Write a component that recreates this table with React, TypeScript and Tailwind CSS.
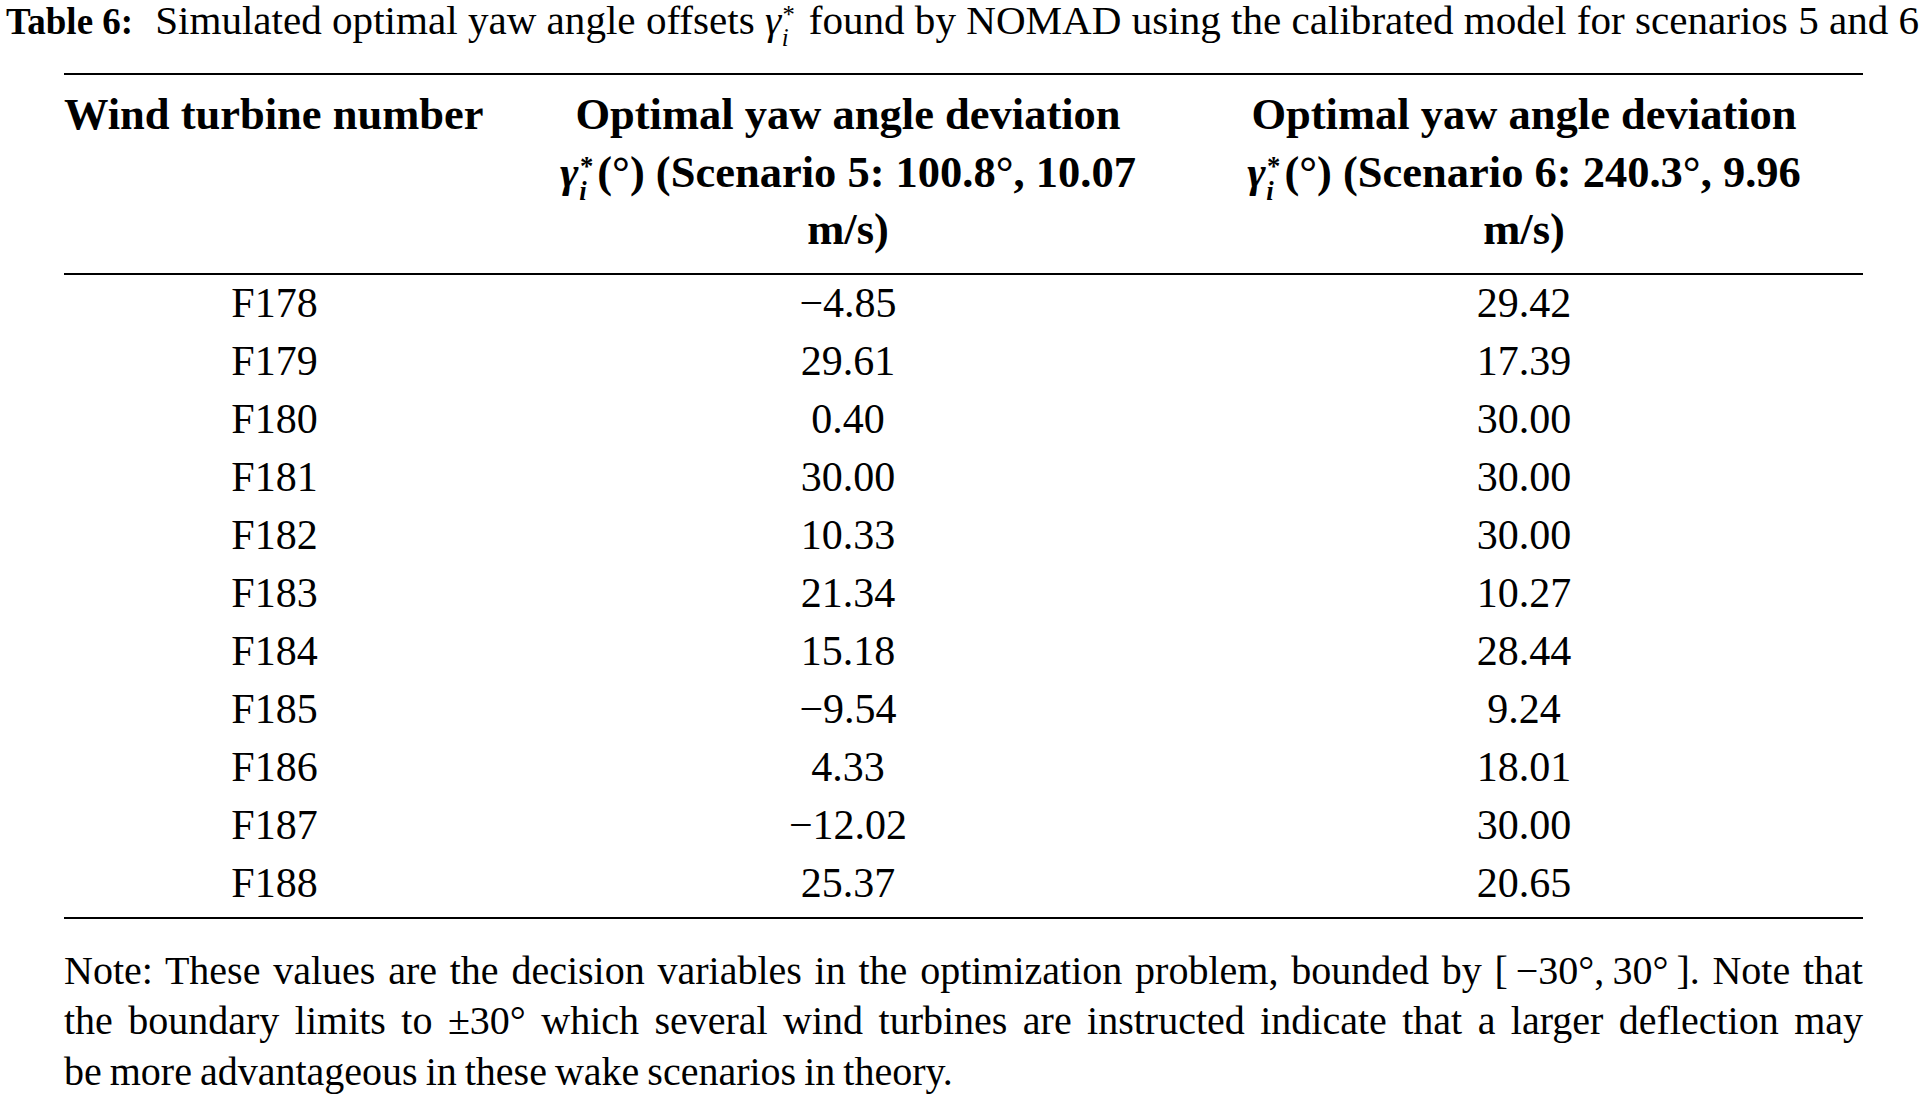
import React from 'react';

const ROWS: [string, string, string][] = [
  ['F178', '−4.85', '29.42'],
  ['F179', '29.61', '17.39'],
  ['F180', '0.40', '30.00'],
  ['F181', '30.00', '30.00'],
  ['F182', '10.33', '30.00'],
  ['F183', '21.34', '10.27'],
  ['F184', '15.18', '28.44'],
  ['F185', '−9.54', '9.24'],
  ['F186', '4.33', '18.01'],
  ['F187', '−12.02', '30.00'],
  ['F188', '25.37', '20.65'],
];

// γ with a stacked * (superscript) and i (subscript)
function GammaStar() {
  return (
    <>
      <span className="italic">γ</span>
      <span className="relative inline-block w-[0.42em]">
        <span className="absolute left-[0.05em] top-[-1.25em] text-[0.6em] leading-none not-italic">*</span>
        <span className="absolute left-[0.02em] top-[-0.33em] text-[0.6em] leading-none italic">i</span>
      </span>
    </>
  );
}

function HeaderCol({ scenario }: { scenario: string }) {
  return (
    <div className="flex flex-col items-center text-center">
      <div className="h-[57.5px] leading-[57.5px] whitespace-nowrap">Optimal yaw angle deviation</div>
      <div className="h-[57.5px] leading-[57.5px] whitespace-nowrap">
        <GammaStar />
        (°) (Scenario {scenario}
      </div>
      <div className="h-[57.5px] leading-[57.5px] whitespace-nowrap">m/s)</div>
    </div>
  );
}

export default function App() {
  return (
    <div className="min-h-screen w-[1927px] bg-white text-black font-['Liberation_Serif','Times_New_Roman',serif] overflow-hidden">
      {/* caption */}
      <div className="h-[40px] leading-[40px] text-[41.1px] whitespace-nowrap pl-[6px]">
        <span className="font-bold text-[37px]">Table 6:</span>
        <span className="inline-block w-[22px]" />
        Simulated optimal yaw angle offsets <GammaStar /> found by NOMAD using the calibrated model for scenarios 5 and 6
      </div>

      <div className="pl-[64px] pt-[33px]">
        <div className="w-[1799px]">
          {/* header */}
          <div className="border-t-2 border-black pt-[11px] pb-[14px] grid grid-cols-[447px_674px_678px] text-[44.5px] font-bold">
            <div className="pr-[26px] h-[57.5px] leading-[57.5px] whitespace-nowrap">Wind turbine number</div>
            <HeaderCol scenario="5: 100.8°, 10.07" />
            <HeaderCol scenario="6: 240.3°, 9.96" />
          </div>

          {/* body */}
          <div className="border-t-2 border-black pb-[4px] text-[42px]">
            {ROWS.map(([id, s5, s6]) => (
              <div key={id} className="grid grid-cols-[447px_674px_678px] h-[58px] leading-[56px]">
                <div className="pr-[26px] text-center">{id}</div>
                <div className="text-center">{s5}</div>
                <div className="text-center">{s6}</div>
              </div>
            ))}
          </div>

          {/* note */}
          <div className="border-t-2 border-black pt-[27px] text-[40px] leading-[50.5px] [word-spacing:-2px]">
            <div className="text-justify [text-align-last:justify] whitespace-nowrap">
              Note: These values are the decision variables in the optimization problem, bounded by [{'\u2009'}−30°,{'\u2009'}30°{'\u2009'}]. Note that
            </div>
            <div className="text-justify [text-align-last:justify] whitespace-nowrap">
              the boundary limits to ±30° which several wind turbines are instructed indicate that a larger deflection may
            </div>
            <div className="whitespace-nowrap">be more advantageous in these wake scenarios in theory.</div>
          </div>
        </div>
      </div>
    </div>
  );
}
